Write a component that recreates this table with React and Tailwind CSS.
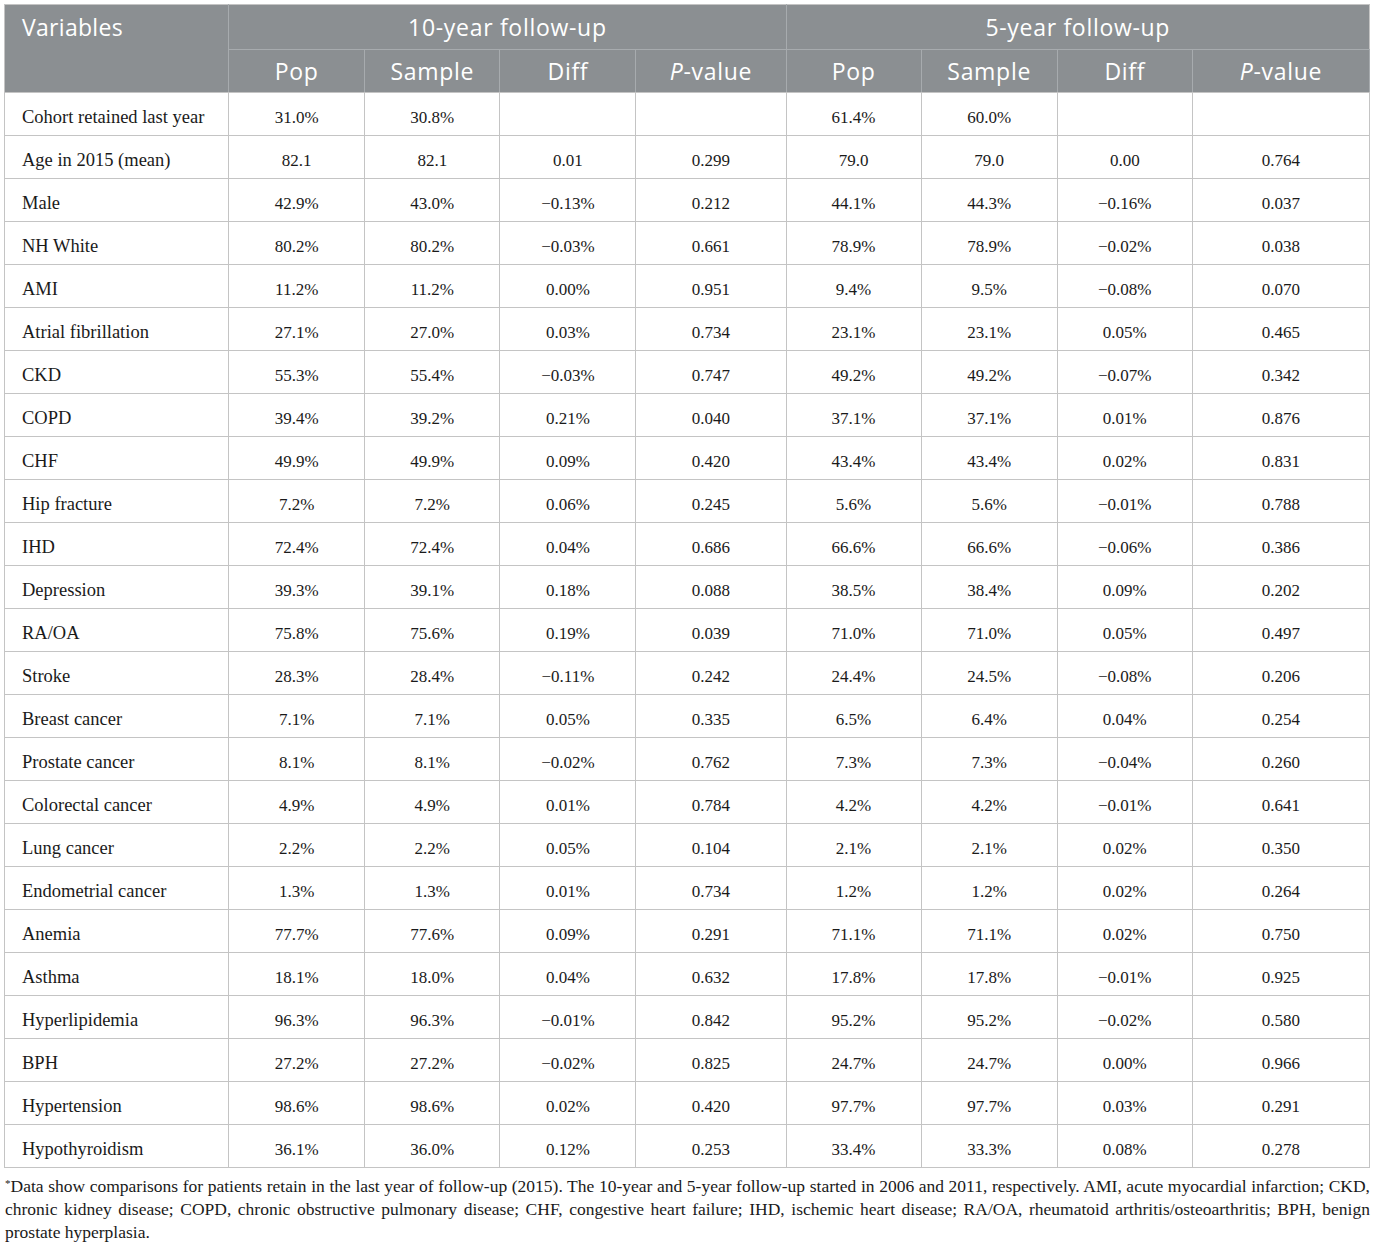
const ROWS = [
  ["Cohort retained last year", "31.0%", "30.8%", "", "", "61.4%", "60.0%", "", ""],
  ["Age in 2015 (mean)", "82.1", "82.1", "0.01", "0.299", "79.0", "79.0", "0.00", "0.764"],
  ["Male", "42.9%", "43.0%", "−0.13%", "0.212", "44.1%", "44.3%", "−0.16%", "0.037"],
  ["NH White", "80.2%", "80.2%", "−0.03%", "0.661", "78.9%", "78.9%", "−0.02%", "0.038"],
  ["AMI", "11.2%", "11.2%", "0.00%", "0.951", "9.4%", "9.5%", "−0.08%", "0.070"],
  ["Atrial fibrillation", "27.1%", "27.0%", "0.03%", "0.734", "23.1%", "23.1%", "0.05%", "0.465"],
  ["CKD", "55.3%", "55.4%", "−0.03%", "0.747", "49.2%", "49.2%", "−0.07%", "0.342"],
  ["COPD", "39.4%", "39.2%", "0.21%", "0.040", "37.1%", "37.1%", "0.01%", "0.876"],
  ["CHF", "49.9%", "49.9%", "0.09%", "0.420", "43.4%", "43.4%", "0.02%", "0.831"],
  ["Hip fracture", "7.2%", "7.2%", "0.06%", "0.245", "5.6%", "5.6%", "−0.01%", "0.788"],
  ["IHD", "72.4%", "72.4%", "0.04%", "0.686", "66.6%", "66.6%", "−0.06%", "0.386"],
  ["Depression", "39.3%", "39.1%", "0.18%", "0.088", "38.5%", "38.4%", "0.09%", "0.202"],
  ["RA/OA", "75.8%", "75.6%", "0.19%", "0.039", "71.0%", "71.0%", "0.05%", "0.497"],
  ["Stroke", "28.3%", "28.4%", "−0.11%", "0.242", "24.4%", "24.5%", "−0.08%", "0.206"],
  ["Breast cancer", "7.1%", "7.1%", "0.05%", "0.335", "6.5%", "6.4%", "0.04%", "0.254"],
  ["Prostate cancer", "8.1%", "8.1%", "−0.02%", "0.762", "7.3%", "7.3%", "−0.04%", "0.260"],
  ["Colorectal cancer", "4.9%", "4.9%", "0.01%", "0.784", "4.2%", "4.2%", "−0.01%", "0.641"],
  ["Lung cancer", "2.2%", "2.2%", "0.05%", "0.104", "2.1%", "2.1%", "0.02%", "0.350"],
  ["Endometrial cancer", "1.3%", "1.3%", "0.01%", "0.734", "1.2%", "1.2%", "0.02%", "0.264"],
  ["Anemia", "77.7%", "77.6%", "0.09%", "0.291", "71.1%", "71.1%", "0.02%", "0.750"],
  ["Asthma", "18.1%", "18.0%", "0.04%", "0.632", "17.8%", "17.8%", "−0.01%", "0.925"],
  ["Hyperlipidemia", "96.3%", "96.3%", "−0.01%", "0.842", "95.2%", "95.2%", "−0.02%", "0.580"],
  ["BPH", "27.2%", "27.2%", "−0.02%", "0.825", "24.7%", "24.7%", "0.00%", "0.966"],
  ["Hypertension", "98.6%", "98.6%", "0.02%", "0.420", "97.7%", "97.7%", "0.03%", "0.291"],
  ["Hypothyroidism", "36.1%", "36.0%", "0.12%", "0.253", "33.4%", "33.3%", "0.08%", "0.278"],
];

const WIDTHS = [224, 136, 135, 136, 150, 135, 136, 135, 177];

function SubHead() {
  const cells = ["Pop", "Sample", "Diff", "pv", "Pop", "Sample", "Diff", "pv"];
  return cells.map((c, i) => (
    <th
      key={i}
      className="border border-[#a7abae] border-b-[#c4c4c4] font-normal text-center align-middle"
    >
      {c === "pv" ? (
        <>
          <span className="italic">P</span>-value
        </>
      ) : (
        c
      )}
    </th>
  ));
}

export default function App() {
  return (
    <div className="bg-white pl-[4px] pt-[4px] w-[1375px] min-h-[1251px]">
      <table
        className="table-fixed border-collapse w-[1366px] border border-[#c4c4c4]"
        style={{ borderSpacing: 0 }}
      >
        <colgroup>
          {WIDTHS.map((w, i) => (
            <col key={i} style={{ width: w }} />
          ))}
        </colgroup>
        <thead className="bg-[#8b8f92] text-white text-[23px] tracking-[0.7px] font-['Open_Sans',sans-serif]">
          <tr className="h-[45px]">
            <th
              rowSpan={2}
              className="border border-[#a7abae] border-b-[#c4c4c4] border-t-[#c4c4c4] border-l-[#c4c4c4] font-normal text-left align-top pl-[17px] pt-[7px] leading-[30px] tracking-[0.3px]"
            >
              Variables
            </th>
            <th colSpan={4} className="border border-[#a7abae] border-t-[#c4c4c4] font-normal text-center align-middle">
              10-year follow-up
            </th>
            <th colSpan={4} className="border border-[#a7abae] border-t-[#c4c4c4] border-r-[#c4c4c4] font-normal text-center align-middle">
              5-year follow-up
            </th>
          </tr>
          <tr className="h-[43px]">
            <SubHead />
          </tr>
        </thead>
        <tbody className="text-[17px] text-[#1a1a1a] font-['Liberation_Serif',serif]">
          {ROWS.map((r, ri) => (
            <tr key={ri} className="h-[43px]">
              {r.map((v, ci) => (
                <td
                  key={ci}
                  className={
                    "border border-[#c4c4c4] align-middle pt-[7px] " +
                    (ci === 0 ? "text-left pl-[17px] text-[18.5px]" : "text-center")
                  }
                >
                  {v}
                </td>
              ))}
            </tr>
          ))}
        </tbody>
      </table>
      <div className="w-[1366px] mt-[7px] text-[17.5px] leading-[23px] text-[#1a1a1a] font-['Liberation_Serif',serif] pl-[1px]">
        <div className="text-justify [text-align-last:justify]">
          <sup className="text-[11px]">*</sup>Data show comparisons for patients retain in the last year of follow-up (2015). The 10-year and 5-year follow-up started in 2006 and 2011, respectively. AMI, acute myocardial infarction; CKD,
        </div>
        <div className="text-justify [text-align-last:justify]">
          chronic kidney disease; COPD, chronic obstructive pulmonary disease; CHF, congestive heart failure; IHD, ischemic heart disease; RA/OA, rheumatoid arthritis/osteoarthritis; BPH, benign
        </div>
        <div>prostate hyperplasia.</div>
      </div>
    </div>
  );
}
